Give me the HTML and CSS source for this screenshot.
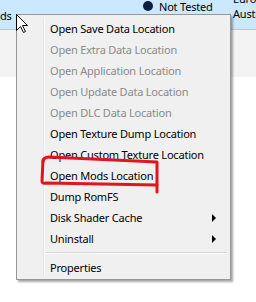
FILE: index.html
```html
<!DOCTYPE html>
<html lang="en">
<head>
    <meta charset="UTF-8">
    <meta name="viewport" content="width=device-width, initial-scale=1.0">
    <title>Game List Context Menu</title>
    <link rel="stylesheet" href="styles.css">
</head>

<body>
    <div class="game-list">
        <div class="row selected">
            <div class="cell name">ds</div>
            <div class="cell status"><span class="dot"></span>Not Tested</div>
            <div class="cell region"><span>Europe</span><span>Australia</span></div>
        </div>
        <div class="row alt"></div>
        <div class="row"></div>
    </div>

    <div class="menu">
        <div class="item">Open Save Data Location</div>
        <div class="item disabled">Open Extra Data Location</div>
        <div class="item disabled">Open Application Location</div>
        <div class="item disabled">Open Update Data Location</div>
        <div class="item disabled">Open DLC Data Location</div>
        <div class="item">Open Texture Dump Location</div>
        <div class="item">Open Custom Texture Location</div>
        <div class="item">Open Mods Location</div>
        <div class="item">Dump RomFS</div>
        <div class="item">Disk Shader Cache<span class="arrow"></span></div>
        <div class="item">Uninstall<span class="arrow"></span></div>
        <div class="separator"></div>
        <div class="item">Properties</div>
    </div>

    <!-- hand drawn highlight round the mods entry -->
    <svg class="annotation" viewBox="0 0 256 302" width="256" height="302">
        <path d="M 43 162 Q 43 157 49 157 L 157 162 L 157 192" />
        <path d="M 43 160 L 42 181 Q 42 184 46 183 L 157 185" />
    </svg>

    <svg class="cursor" viewBox="0 0 13 20" width="13" height="20">
        <polygon points="0.5,0.5 0.5,16.5 4.5,12.5 7.5,18.5 9.5,17.5 6.5,11.5 11.5,11.5" />
    </svg>
</body>

</html>
```

FILE: styles.css
```css
html, body {
    margin: 0;
    width: 256px;
    height: 302px;
    overflow: hidden;
}

body {
    background-color: white;
    font-family: "Noto Sans", "Open Sans", sans-serif;
    font-size: 11px;
    letter-spacing: -0.2px;
    color: black;
}

.game-list {
    display: flex;
    flex-direction: column;
}

.row {
    display: grid;
    grid-template-columns: 141px 90px 1fr;
    height: 47px;
}

.row.selected {
    height: 29px;
    background-color: #cce8ff;
    border-bottom: 1px solid #99d1ff;
    overflow: hidden;
}

.row.alt {
    background-color: #f3f3f3;
}

.cell {
    white-space: nowrap;
    overflow: hidden;
}

.cell.name {
    align-self: center;
    padding-top: 1px;
}

.cell.status {
    display: flex;
    align-items: center;
    gap: 6px;
    padding-left: 2px;
    margin-top: -10px;
    height: 32px;
}

.dot {
    flex: none;
    width: 10px;
    height: 10px;
    border-radius: 50%;
    background-color: #0c1f3e;
}

.cell.region {
    display: flex;
    flex-direction: column;
    padding-left: 2px;
    margin-top: -9px;
    line-height: 15px;
}

.menu {
    position: absolute;
    left: 16px;
    top: 14px;
    width: 215px;
    box-sizing: border-box;
    padding: 3px 2px 1px;
    background-color: #f0f0f0;
    border: 1px solid #979797;
    box-shadow: 2px 2px 2px rgba(0, 0, 0, 0.35);
}

/* the icon gutter line */
.menu::before {
    content: "";
    position: absolute;
    left: 26px;
    top: 2px;
    bottom: 2px;
    width: 1px;
    background-color: #e2e3e3;
    border-right: 1px solid white;
}

.item {
    display: flex;
    align-items: center;
    height: 21px;
    padding-left: 31px;
    padding-right: 12px;
    white-space: nowrap;
}

.item.disabled {
    color: #8a8a8a;
}

.arrow {
    margin-left: auto;
    width: 0;
    height: 0;
    border-left: 4px solid black;
    border-top: 4px solid transparent;
    border-bottom: 4px solid transparent;
}

.separator {
    height: 1px;
    margin: 3px 1px 3px 27px;
    background-color: #d7d7d7;
    border-bottom: 1px solid white;
}

.annotation {
    position: absolute;
    left: 0;
    top: 0;
    pointer-events: none;
}

.annotation path {
    fill: none;
    stroke: #e3141c;
    stroke-width: 3;
    stroke-linecap: round;
    stroke-linejoin: round;
}

.cursor {
    position: absolute;
    left: 16px;
    top: 14px;
}

.cursor polygon {
    fill: white;
    stroke: black;
    stroke-width: 1;
    stroke-linejoin: round;
}
```
